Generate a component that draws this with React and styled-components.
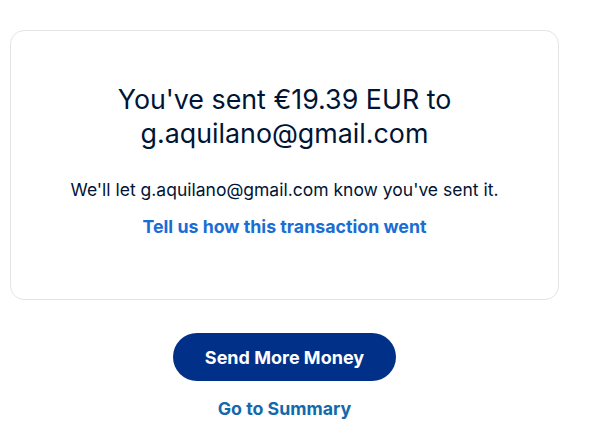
import React from 'react';
import styled, { createGlobalStyle } from 'styled-components';

const GlobalStyle = createGlobalStyle`
  body {
    margin: 0;
    background: #ffffff;
    font-family: Inter, "Liberation Sans", sans-serif;
  }
`;

const Page = styled.div`
  width: 549px;
  padding: 30px 0 0 10px;
  display: flex;
  flex-direction: column;
  align-items: center;
`;

const Card = styled.section`
  box-sizing: border-box;
  width: 100%;
  height: 270px;
  border: 1px solid #e4e4e4;
  border-radius: 14px;
  padding: 51px 20px 0;
  display: flex;
  flex-direction: column;
  align-items: center;
  text-align: center;
`;

const Title = styled.h1`
  margin: 0;
  font-size: 26.8px;
  line-height: 34px;
  font-weight: 400;
  color: #001435;
`;

const Message = styled.p`
  margin: 28px 0 0;
  font-size: 17.5px;
  line-height: 24px;
  color: #001435;
`;

const Link = styled.a`
  margin-top: ${({ gap }) => gap}px;
  font-size: 17.8px;
  line-height: 24px;
  font-weight: 700;
  color: ${({ color }) => color};
  text-decoration: none;
  cursor: pointer;
`;

const Button = styled.button`
  margin-top: 33px;
  width: 223px;
  height: 48px;
  border: none;
  border-radius: 24px;
  background: #003087;
  color: #ffffff;
  font-family: inherit;
  font-size: 18px;
  font-weight: 700;
  cursor: pointer;
`;

export default function App() {
  return (
    <>
      <GlobalStyle />
      <Page>
        <Card>
          <Title>
            You've sent €19.39 EUR to
            <br />
            g.aquilano@gmail.com
          </Title>
          <Message>We'll let g.aquilano@gmail.com know you've sent it.</Message>
          <Link gap={13} color="#1a6dd5">Tell us how this transaction went</Link>
        </Card>
        <Button>Send More Money</Button>
        <Link gap={16} color="#1469ab">Go to Summary</Link>
      </Page>
    </>
  );
}
